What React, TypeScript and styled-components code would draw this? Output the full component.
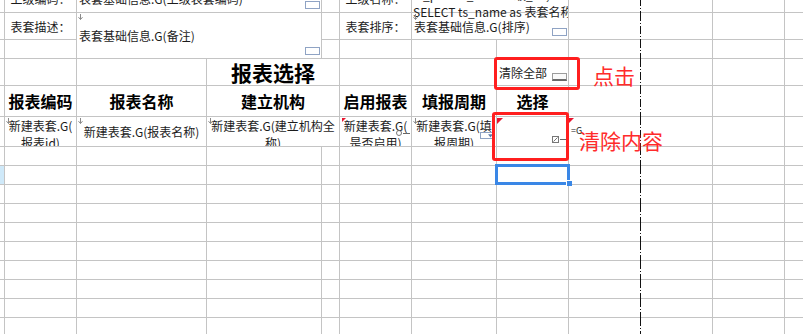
import React from 'react'
import styled, { createGlobalStyle, css } from 'styled-components'

// column widths / row heights include the 1px right / bottom grid line
const COLS = [5, 72, 130, 115, 18, 72, 85, 72, 72, 72, 72, 72]
const ROWS = [28, 27, 19, 27, 31, 30, 19, 19, 19, 19, 19, 19, 19, 19, 19, 19]
const PAGE_BREAK_COL = 8
const SELECTED = { r: 7, c: 7 }

const GlobalStyle = createGlobalStyle`
  html, body {
    margin: 0;
    background: #fff;
    overflow: hidden;
  }
  body {
    font-family: 'Noto Sans CJK SC', 'Noto Sans', sans-serif;
    color: #1c1c1c;
  }
`

type Kind = 'label' | 'value' | 'head' | 'title' | 'data' | 'button' | 'sql' | 'note' | 'blank'

const kindStyles: Record<Kind, ReturnType<typeof css>> = {
  blank: css``,
  label: css`
    justify-content: center;
    text-align: center;
    font-size: 12px;
  `,
  value: css`
    justify-content: flex-start;
    font-size: 12px;
    padding: 0 1px 0 2px;
  `,
  sql: css`
    align-items: flex-start;
    justify-content: flex-start;
    padding: 1px 1px 0 1px;
    font-size: 12px;
    white-space: pre;
    overflow-x: clip;
    overflow-y: visible;
  `,
  button: css`
    justify-content: flex-start;
    font-size: 12px;
    padding: 0 1px 0 2px;
  `,
  note: css`
    justify-content: flex-start;
    padding: 6px 0 0 24px;
    font-size: 21px;
    line-height: 21px;
    color: #ff2b2b;
    white-space: nowrap;
  `,
  head: css`
    justify-content: center;
    font-size: 16px;
    font-weight: 700;
    color: #000;
  `,
  title: css`
    justify-content: center;
    font-size: 21px;
    font-weight: 700;
    color: #000;
  `,
  data: css`
    justify-content: center;
    text-align: center;
    font-size: 12px;
    overflow: hidden;
  `,
}

const Sheet = styled.div`
  display: grid;
  grid-template-columns: ${COLS.map((w) => `${w}px`).join(' ')};
  grid-template-rows: ${ROWS.map((h) => `${h}px`).join(' ')};
  width: max-content;
  margin-top: -15px;
`

const Cell = styled.div<{
  $r: number
  $c: number
  $rs: number
  $cs: number
  $kind: Kind
  $top?: boolean
  $hl?: boolean
  $pageBreak?: boolean
}>`
  grid-column: ${(p) => p.$c + 1} / span ${(p) => p.$cs};
  grid-row: ${(p) => p.$r + 1} / span ${(p) => p.$rs};
  position: relative;
  box-sizing: border-box;
  display: flex;
  align-items: ${(p) => (p.$top ? 'flex-start' : 'center')};
  min-width: 0;
  border-right: 1px solid #c4c4c4;
  border-bottom: 1px solid #c4c4c4;
  background: ${(p) => (p.$hl ? '#cfe9f9' : 'transparent')};
  line-height: 17px;
  white-space: pre-line;
  ${(p) => kindStyles[p.$kind]}

  ${(p) =>
    p.$pageBreak &&
    css`
      border-right-color: transparent;
      &::after {
        content: '';
        position: absolute;
        top: 0;
        bottom: -1px;
        right: -1px;
        width: 1px;
        background: repeating-linear-gradient(
          to bottom,
          #111 0 8px,
          transparent 8px 10px,
          #111 10px 11px,
          transparent 11px 13px
        );
        z-index: 1;
      }
    `}
`

const CornerSvg = styled.svg`
  position: absolute;
  top: 1px;
  left: 1px;
`

const ArrowMark = () => (
  <CornerSvg width="5" height="6" viewBox="0 0 5 6">
    <path d="M2.5 0 V5.5 M0.5 3.2 L2.5 5.5 L4.5 3.2" fill="none" stroke="#8a8a8a" strokeWidth="1" />
  </CornerSvg>
)

const RedCorner = styled.span<{ $size?: number; $left?: number }>`
  position: absolute;
  top: 1px;
  left: ${(p) => p.$left ?? 0}px;
  width: 0;
  height: 0;
  border-top: ${(p) => p.$size ?? 6}px solid #e8142e;
  border-right: ${(p) => p.$size ?? 6}px solid transparent;
  z-index: 1;
`

// widget indicators sit at the bottom right corner of their cell
const ListBox = styled.span`
  flex: none;
  align-self: flex-end;
  margin: 0 0 3px auto;
  width: 15px;
  height: 8px;
  box-sizing: border-box;
  border: 1px solid #8fa3c4;
  background: #fff;
`

const ButtonBox = styled.span`
  flex: none;
  align-self: flex-end;
  margin: 0 0 4px auto;
  width: 15px;
  height: 8px;
  box-sizing: border-box;
  border: 1px solid #9c9c9c;
  border-bottom: 2px solid #6a6a6a;
  background: #fafafa;
`

const Widget = styled.span<{ $top: number; $right: number }>`
  position: absolute;
  top: ${(p) => p.$top}px;
  right: ${(p) => p.$right}px;
  display: flex;
  align-items: center;
  gap: 1px;
`

const Dash = styled.span<{ $w: number }>`
  width: ${(p) => p.$w}px;
  height: 1px;
  background: #666;
`

const Ring = styled.span`
  width: 6px;
  height: 6px;
  box-sizing: border-box;
  border: 1px solid #777;
  border-radius: 50%;
`

const DropBox = styled.span`
  display: flex;
  width: 15px;
  height: 7px;
  box-sizing: border-box;
  border: 1px solid #8fa3c4;
  background: #fff;

  &::after {
    content: '';
    margin-left: auto;
    width: 7px;
    clip-path: polygon(15% 25%, 85% 25%, 50% 90%);
    background-color: #5d7aa8;
  }
`

const TickBox = styled.span`
  display: flex;
  align-items: center;
  justify-content: center;
  width: 7px;
  height: 7px;
  box-sizing: border-box;
  border: 1px solid #777;
`

const Formula = styled.span`
  position: absolute;
  top: 9px;
  left: 2px;
  font-size: 9px;
  line-height: 9px;
  color: #222;
  z-index: 1;
`

// annotations drawn over the sheet
const Callout = styled.span<{ $top: number; $left: number; $w: number; $h: number }>`
  position: absolute;
  top: ${(p) => p.$top}px;
  left: ${(p) => p.$left}px;
  width: ${(p) => p.$w}px;
  height: ${(p) => p.$h}px;
  box-sizing: border-box;
  border: 3px solid #ff1f1f;
  border-radius: 3px;
  z-index: 3;
  pointer-events: none;
`

const FloatNote = styled.span`
  position: absolute;
  top: 13px;
  left: 10px;
  font-size: 21px;
  line-height: 21px;
  color: #ff2b2b;
  white-space: nowrap;
  z-index: 3;
`

const Selection = styled.span`
  position: absolute;
  top: -2px;
  left: -2px;
  right: -2px;
  bottom: -1px;
  border: 3px solid #3a87e6;
  z-index: 2;

  &::after {
    content: '';
    position: absolute;
    right: -5px;
    bottom: -4px;
    width: 5px;
    height: 5px;
    background: #3a87e6;
    border-left: 1px solid #fff;
    border-top: 1px solid #fff;
  }
`

type CellDef = {
  r: number
  c: number
  rs?: number
  cs?: number
  kind?: Kind
  text?: string
  top?: boolean
  extra?: React.ReactNode
}

const defs: CellDef[] = [
  { r: 0, c: 1, kind: 'label', text: '上级编码：' },
  { r: 0, c: 2, cs: 2, kind: 'value', text: '表套基础信息.G(上级表套编码)', extra: <ListBox /> },
  { r: 0, c: 5, kind: 'label', text: '上级名称：' },
  {
    r: 0,
    c: 6,
    cs: 2,
    kind: 'sql',
    text: 'ts_parent_id as 上级_id ,\nSELECT ts_name as 表套名称',
    extra: <ListBox />,
  },

  { r: 1, c: 1, kind: 'label', text: '表套描述：' },
  {
    r: 1,
    c: 2,
    rs: 2,
    cs: 2,
    kind: 'value',
    text: '表套基础信息.G(备注)',
    extra: (
      <>
        <ArrowMark />
        <ListBox />
      </>
    ),
  },
  { r: 1, c: 5, kind: 'label', text: '表套排序：' },
  {
    r: 1,
    c: 6,
    cs: 2,
    kind: 'value',
    text: '表套基础信息.G(排序)',
    extra: (
      <>
        <ArrowMark />
        <ListBox />
      </>
    ),
  },

  { r: 3, c: 3, cs: 2, kind: 'title', text: '报表选择' },
  {
    r: 3,
    c: 7,
    kind: 'button',
    text: '清除全部',
    extra: (
      <>
        <ButtonBox />
        <Callout $top={-2} $left={-3} $w={86} $h={33} />
      </>
    ),
  },
  { r: 3, c: 8, kind: 'note', text: '点击' },

  { r: 4, c: 1, kind: 'head', text: '报表编码' },
  { r: 4, c: 2, kind: 'head', text: '报表名称' },
  { r: 4, c: 3, cs: 2, kind: 'head', text: '建立机构' },
  { r: 4, c: 5, kind: 'head', text: '启用报表' },
  { r: 4, c: 6, kind: 'head', text: '填报周期' },
  { r: 4, c: 7, kind: 'head', text: '选择' },

  { r: 5, c: 1, kind: 'data', top: true, text: '新建表套.G(\n报表id)', extra: <ArrowMark /> },
  { r: 5, c: 2, kind: 'data', text: '新建表套.G(报表名称)', extra: <ArrowMark /> },
  { r: 5, c: 3, cs: 2, kind: 'data', top: true, text: '新建表套.G(建立机构全\n称)', extra: <ArrowMark /> },
  {
    r: 5,
    c: 5,
    kind: 'data',
    top: true,
    text: '新建表套.G(\n是否启用)',
    extra: (
      <>
        <RedCorner $size={4} $left={2} />
        <Widget $top={13} $right={1}>
          <Ring />
          <Dash $w={7} />
        </Widget>
      </>
    ),
  },
  {
    r: 5,
    c: 6,
    kind: 'data',
    top: true,
    text: '新建表套.G(填\n报周期)',
    extra: (
      <>
        <ArrowMark />
        <Widget $top={15} $right={1}>
          <DropBox />
        </Widget>
      </>
    ),
  },
  {
    r: 5,
    c: 7,
    extra: (
      <>
        <RedCorner />
        <Widget $top={19} $right={2}>
          <TickBox>
            <svg width="5" height="5" viewBox="0 0 5 5">
              <path d="M0.5 4.5 L4.5 0.5" stroke="#777" strokeWidth="1" />
            </svg>
          </TickBox>
          <Dash $w={6} />
        </Widget>
        <Callout $top={-5} $left={-5} $w={77} $h={49} />
      </>
    ),
  },
  {
    r: 5,
    c: 8,
    extra: (
      <>
        <RedCorner $left={-1} />
        <Formula>=G</Formula>
        <FloatNote>清除内容</FloatNote>
      </>
    ),
  },

  { r: SELECTED.r, c: SELECTED.c, extra: <Selection /> },
]

const buildCells = (): CellDef[] => {
  const taken = ROWS.map(() => COLS.map(() => false))
  defs.forEach((d) => {
    for (let r = d.r; r < d.r + (d.rs ?? 1); r++) {
      for (let c = d.c; c < d.c + (d.cs ?? 1); c++) taken[r][c] = true
    }
  })
  const blanks: CellDef[] = []
  taken.forEach((row, r) =>
    row.forEach((used, c) => {
      if (!used) blanks.push({ r, c })
    }),
  )
  return [...defs, ...blanks].sort((a, b) => a.r - b.r || a.c - b.c)
}

const App = () => {
  const cells = buildCells()

  return (
    <>
      <GlobalStyle />
      <Sheet>
        {cells.map((d) => (
          <Cell
            key={`${d.r}-${d.c}`}
            $r={d.r}
            $c={d.c}
            $rs={d.rs ?? 1}
            $cs={d.cs ?? 1}
            $kind={d.kind ?? 'blank'}
            $top={d.top}
            $hl={d.c === 0 && d.r === SELECTED.r}
            $pageBreak={d.c + (d.cs ?? 1) - 1 === PAGE_BREAK_COL}
          >
            {d.text}
            {d.extra}
          </Cell>
        ))}
      </Sheet>
    </>
  )
}

export default App
